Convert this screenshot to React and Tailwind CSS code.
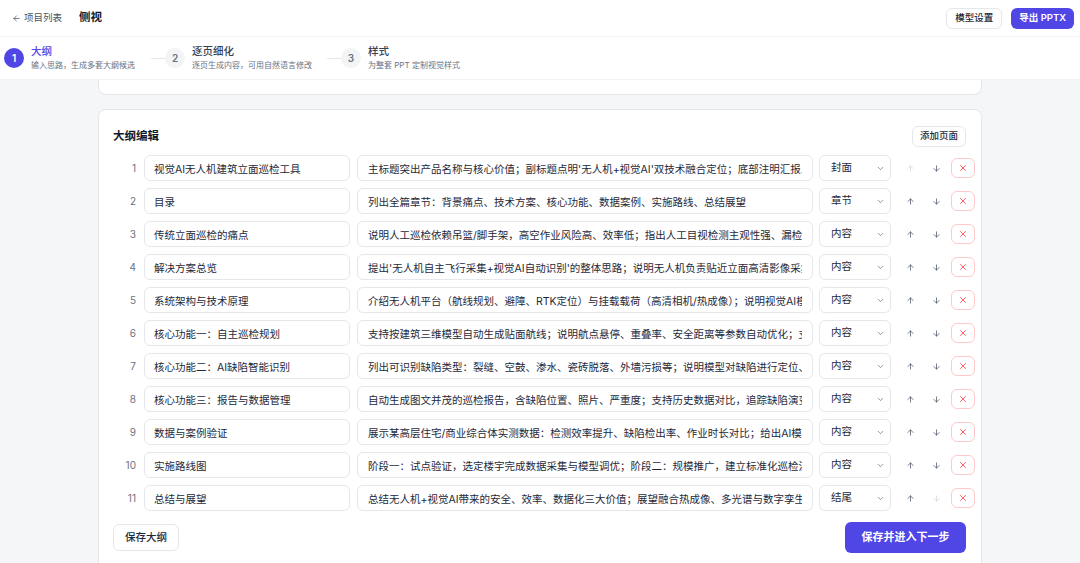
import React from "react";
import { ArrowLeft, ArrowUp, ArrowDown, X, ChevronDown } from "lucide-react";

const rows = [
  ["视觉AI无人机建筑立面巡检工具", "主标题突出产品名称与核心价值；副标题点明'无人机+视觉AI'双技术融合定位；底部注明汇报人/日期", "封面"],
  ["目录", "列出全篇章节：背景痛点、技术方案、核心功能、数据案例、实施路线、总结展望", "章节"],
  ["传统立面巡检的痛点", "说明人工巡检依赖吊篮/脚手架，高空作业风险高、效率低；指出人工目视检测主观性强、漏检率高", "内容"],
  ["解决方案总览", "提出'无人机自主飞行采集+视觉AI自动识别'的整体思路；说明无人机负责贴近立面高清影像采集，AI负责缺陷识别", "内容"],
  ["系统架构与技术原理", "介绍无人机平台（航线规划、避障、RTK定位）与挂载载荷（高清相机/热成像）；说明视觉AI模块的训练与推理", "内容"],
  ["核心功能一：自主巡检规划", "支持按建筑三维模型自动生成贴面航线；说明航点悬停、重叠率、安全距离等参数自动优化；支持断点续飞", "内容"],
  ["核心功能二：AI缺陷智能识别", "列出可识别缺陷类型：裂缝、空鼓、渗水、瓷砖脱落、外墙污损等；说明模型对缺陷进行定位、分类与分级", "内容"],
  ["核心功能三：报告与数据管理", "自动生成图文并茂的巡检报告，含缺陷位置、照片、严重度；支持历史数据对比，追踪缺陷演变趋势", "内容"],
  ["数据与案例验证", "展示某高层住宅/商业综合体实测数据：检测效率提升、缺陷检出率、作业时长对比；给出AI模型准确率", "内容"],
  ["实施路线图", "阶段一：试点验证，选定楼宇完成数据采集与模型调优；阶段二：规模推广，建立标准化巡检流程", "内容"],
  ["总结与展望", "总结无人机+视觉AI带来的安全、效率、数据化三大价值；展望融合热成像、多光谱与数字孪生的发展方向", "结尾"],
];

const font = { fontFamily: 'Inter, "Noto Sans CJK SC", sans-serif' };

function Step({ n, title, sub, active }) {
  return (
    <div className="flex items-center gap-[7px] shrink-0">
      <div
        className={
          "w-5 h-5 rounded-full flex items-center justify-center text-[10px] font-semibold " +
          (active ? "bg-[#4f46e5] text-white" : "bg-gray-100 text-gray-500")
        }
      >
        {n}
      </div>
      <div className="flex flex-col leading-none">
        <div className={"text-[10.5px] font-medium " + (active ? "text-[#4f46e5]" : "text-gray-700")}>{title}</div>
        <div className="text-[8px] text-gray-500 mt-[4px]">{sub}</div>
      </div>
    </div>
  );
}

export default function App() {
  return (
    <div className="min-h-screen bg-[#f5f6f8] text-gray-800" style={font}>
      <header className="h-[37px] bg-white border-b border-gray-100 flex items-center justify-between pl-3 pr-[6px]">
        <div className="flex items-center">
          <div className="flex items-center gap-[3px] text-[9.5px] text-gray-600">
            <ArrowLeft size={9} strokeWidth={2} />
            <span>项目列表</span>
          </div>
          <div className="ml-[17px] text-[11.5px] font-semibold text-gray-900">侧视</div>
        </div>
        <div className="flex items-center gap-[9px]">
          <button className="h-[21px] px-[8px] rounded-md border border-gray-200 bg-white text-[9.5px] font-medium text-gray-800">
            模型设置
          </button>
          <button className="h-[21px] px-[8px] rounded-md bg-[#4f46e5] text-[9.5px] font-semibold text-white">
            导出 PPTX
          </button>
        </div>
      </header>

      <div className="h-[43px] bg-white border-b border-gray-100 flex items-center pl-1">
        <Step n="1" title="大纲" sub="输入思路，生成多套大纲候选" active />
        <div className="ml-[16px] w-[14px] h-px bg-gray-200" />
        <Step n="2" title="逐页细化" sub="逐页生成内容，可用自然语言修改" />
        <div className="ml-[15px] w-[14px] h-px bg-gray-200" />
        <Step n="3" title="样式" sub="为整套 PPT 定制视觉样式" />
      </div>

      <div className="w-[884px] mx-auto">
        <div className="h-[15px] bg-white border-x border-b border-gray-200 rounded-b-lg" />

        <div className="mt-[14px] bg-white border border-gray-200 rounded-lg pl-[14px] pr-[15px] pt-4 pb-6">
          <div className="h-[21px] flex items-center justify-between">
            <div className="text-[11.5px] font-semibold text-gray-900">大纲编辑</div>
            <button className="h-[21px] px-[7px] rounded-md border border-gray-200 bg-white text-[9.5px] font-medium text-gray-800">
              添加页面
            </button>
          </div>

          <div className="mt-[8px] flex flex-col gap-[7px]">
            {rows.map(([t, d, k], i) => (
              <div key={i} className="flex items-center h-[26px]">
                <div className="w-[31px] shrink-0 pr-[8px] text-right text-[10px] text-gray-500">{i + 1}</div>
                <input
                  readOnly
                  defaultValue={t}
                  className="w-[206px] shrink-0 h-[26px] rounded-md border border-gray-200 px-[9px] text-[10.5px] text-gray-800 outline-none bg-white"
                  style={font}
                />
                <input
                  readOnly
                  defaultValue={d}
                  className="ml-[7px] w-[456px] shrink-0 h-[26px] rounded-md border border-gray-200 px-[10px] text-[10.5px] text-gray-800 outline-none bg-white"
                  style={font}
                />
                <div className="ml-[6px] w-[72px] shrink-0 h-[26px] rounded-md border border-gray-200 bg-white flex items-center justify-between pl-[11px] pr-[5px] text-[10.5px] text-gray-800">
                  <span>{k}</span>
                  <ChevronDown size={9} className="text-gray-500" />
                </div>
                <div className={"ml-[10px] w-[18px] shrink-0 flex justify-center " + (i === 0 ? "text-gray-300" : "text-gray-600")}>
                  <ArrowUp size={9} strokeWidth={2} />
                </div>
                <div className={"ml-[8px] w-[18px] shrink-0 flex justify-center " + (i === rows.length - 1 ? "text-gray-300" : "text-gray-600")}>
                  <ArrowDown size={9} strokeWidth={2} />
                </div>
                <div className="ml-[6px] w-[24px] shrink-0 h-[20px] rounded-md border border-red-200 flex items-center justify-center text-red-500">
                  <X size={10} strokeWidth={1.8} />
                </div>
              </div>
            ))}
          </div>

          <div className="mt-[11px] flex items-center justify-between">
            <button className="h-[27px] px-[11px] rounded-md border border-gray-200 bg-white text-[10.5px] font-medium text-gray-800">
              保存大纲
            </button>
            <button className="h-[31px] w-[121px] rounded-md bg-[#4f46e5] text-[11px] font-semibold text-white">
              保存并进入下一步
            </button>
          </div>
        </div>
      </div>
    </div>
  );
}
